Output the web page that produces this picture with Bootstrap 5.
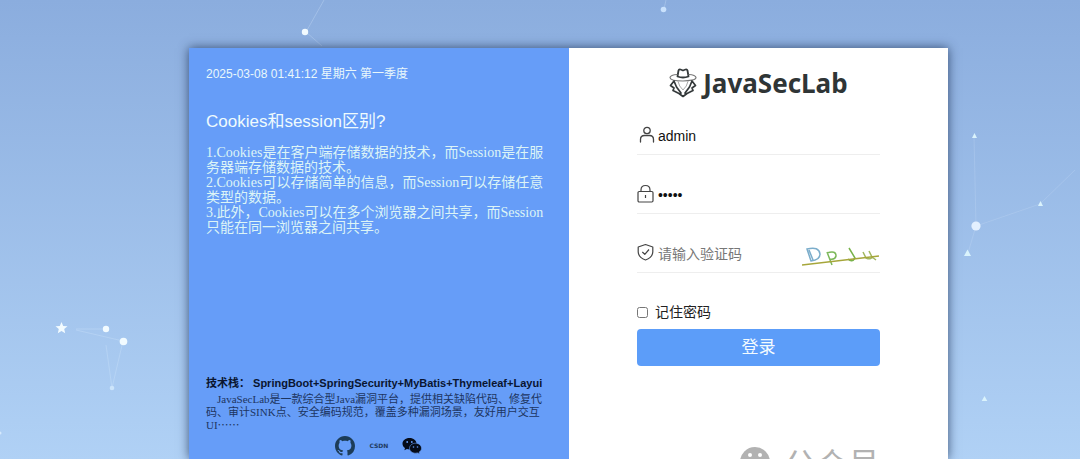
<!DOCTYPE html>
<html lang="zh-CN">
<head>
<meta charset="utf-8">
<meta name="viewport" content="width=device-width, initial-scale=1">
<title>JavaSecLab</title>
<link href="https://cdn.jsdelivr.net/npm/bootstrap@5.3.0/dist/css/bootstrap.min.css" rel="stylesheet">
<style>
  body { font-family: "Liberation Sans", "Noto Sans CJK SC", sans-serif; background: linear-gradient(#8badde, #b0d1f5) no-repeat; color: #222; }
  .stage { height: 100vh; padding-top: 48px; }
  .login-panel { width: 70.3%; margin-left: 17.5%; background: #fff; box-shadow: 0 0 10px rgba(30, 50, 85, .8); }
  .intro { background: #669df8; padding: 18px 17px 0; }
  .clock { font-size: 12px; line-height: 16px; color: #e9f8fb; }
  .topic { font-size: 17px; line-height: 24px; margin: 28px 0 11px; color: #effbfd; font-weight: 400; }
  .serif { font-family: "Liberation Serif", "Noto Sans CJK SC", serif; }
  .answer { font-size: 14px; line-height: 15px; color: #dcf4f6; }
  .stack { font-size: 11px; line-height: 16px; color: #0a1530; white-space: nowrap; }
  .about { font-size: 11px; line-height: 13px; text-indent: 11px; color: #1d3561; margin: 2px 0 0; }
  .social { height: 27px; gap: 14px; }
  .csdn { font: bold 6px "DejaVu Sans", sans-serif; color: #1e3a63; }
  .sign-in { padding: 18px 9% 0; }
  .brand { font: 700 26px/34px "Noto Sans", sans-serif; color: #2f3536; gap: 6px; }
  .field { border-bottom: 1px solid #eee; height: 59px; padding-top: 22px; gap: 3px; }
  .field.first { height: 55px; padding-top: 18px; }
  .field label { padding-bottom: 2px; }
  .field input { font-size: 14px; line-height: 20px; color: #111; background: none; min-width: 0; }
  .field input::placeholder { color: #777; opacity: 1; }
  .remember { font-size: 14px; line-height: 20px; margin-top: 29px; gap: 7px; }
  .remember input { width: 11px; height: 11px; margin: 0; }
  .btn-login { background: #5c9df9; color: #f3fbff; font-size: 17px; line-height: 25px; border: 0; border-radius: 4px; padding: 6px; margin-top: 7px; }
  .btn-login:hover { background: #4a8ef0; color: #fff; }
  .account { color: #b2b2b2; font-size: 32px; line-height: 36px; margin-top: 81px; gap: 6px; white-space: nowrap; }
</style>
</head>
<body class="overflow-hidden">
<svg class="position-absolute top-0 start-0 w-100 h-100" viewBox="0 0 1080 459" preserveAspectRatio="xMidYMid slice" aria-hidden="true">
  <g stroke="#d5e8fb" stroke-opacity=".3" fill="none">
    <path d="M76 329 105 329M76 330 123 341M106 345 112 388 123 341M306 32 324 0M306 32 322 46M664 9 666 0"/>
    <path d="M976 226 1040 204 1075 170M976 226 974 136M976 226 968 253" stroke-opacity=".2"/>
  </g>
  <g fill="#f2fbff">
    <path d="m61.500 322 1.700 4 4.300.3-3.300 2.800 1 4.200-3.700-2.300-3.700 2.300 1-4.200-3.300-2.800 4.300-.3z"/>
    <circle cx="106" cy="329" r="3.200"/><circle cx="123.500" cy="341.500" r="3.800"/>
    <circle cx="305" cy="32" r="3.200"/><circle cx="976" cy="226" r="4.600" fill="#e3f0ff"/>
    <path d="m967.500 249.500 3.500 6.500h-7zM974.500 133l2.500 5h-5zM984.500 396l2.800 5h-5.600zM1040.500 201l2.500 5h-5z" fill="#daf3fc"/>
    <circle cx="112" cy="388" r="2.300" fill="#cde5fb"/><circle cx="663.500" cy="9.500" r="2.800" fill="#c9e1fc"/><circle cx="0" cy="433" r="1.500" fill="#d5e9fc"/>
  </g>
</svg>
<main class="stage position-relative">
  <div class="login-panel row g-0 h-100">
    <section class="intro col-6 d-flex flex-column h-100">
      <div class="clock">2025-03-08 01:41:12 星期六 第一季度</div>
      <h1 class="topic">Cookies和session区别?</h1>
      <div class="answer serif">
        <div>1.Cookies是在客户端存储数据的技术，而Session是在服务器端存储数据的技术。</div>
        <div>2.Cookies可以存储简单的信息，而Session可以存储任意类型的数据。</div>
        <div>3.此外，Cookies可以在多个浏览器之间共享，而Session只能在同一浏览器之间共享。</div>
      </div>
      <div class="stack fw-bold mt-auto">技术栈： SpringBoot+SpringSecurity+MyBatis+Thymeleaf+Layui</div>
      <p class="about serif">JavaSecLab是一款综合型Java漏洞平台，提供相关缺陷代码、修复代码、审计SINK点、安全编码规范，覆盖多种漏洞场景，友好用户交互UI⋯⋯</p>
      <div class="social d-flex justify-content-center align-items-center flex-shrink-0">
        <a href="#" aria-label="GitHub" class="d-flex"><svg width="20" height="20" viewBox="0 0 16 16" fill="#1c3c58"><path d="M8 0C3.580 0 0 3.580 0 8c0 3.540 2.290 6.530 5.470 7.590.4.070.55-.17.55-.38 0-.19-.01-.82-.01-1.490-2.010.37-2.530-.49-2.690-.94-.09-.23-.48-.94-.82-1.130-.28-.15-.68-.52-.01-.53.63-.01 1.080.58 1.230.82.72 1.210 1.870.87 2.330.66.07-.52.28-.87.51-1.070-1.780-.2-3.640-.89-3.640-3.950 0-.87.31-1.590.82-2.150-.08-.2-.36-1.020.08-2.120 0 0 .67-.21 2.200.82.64-.18 1.320-.27 2-.27s1.360.09 2 .27c1.530-1.040 2.200-.82 2.200-.82.44 1.100.16 1.920.08 2.120.51.56.82 1.270.82 2.150 0 3.070-1.870 3.750-3.650 3.950.29.25.54.73.54 1.480 0 1.070-.01 1.930-.01 2.200 0 .21.15.46.55.38A8.010 8.010 0 0 0 16 8c0-4.420-3.580-8-8-8"/></svg></a>
        <a href="#" class="csdn text-decoration-none">CSDN</a>
        <a href="#" aria-label="微信" class="d-flex"><svg width="20" height="18" viewBox="0 0 20 18"><path d="M7.500 1C3.400 1 .5 3.500.5 6.700c0 1.800 1 3.300 2.500 4.300l-.6 2.200 2.500-1.200c.9.300 1.700.4 2.600.4 4.100 0 7-2.500 7-5.700S11.600 1 7.500 1" fill="#050b18"/><path d="M13.500 6.200c-3.300 0-6 2.200-6 5s2.700 5 6 5c.8 0 1.500-.1 2.200-.3l2 1.100-.5-1.900c1.400-1 2.300-2.300 2.300-3.900 0-2.800-2.700-5-6-5" fill="#050b18" stroke="#669df8" stroke-width=".6"/><g fill="#669df8"><circle cx="5.200" cy="5" r=".9"/><circle cx="9.800" cy="5" r=".9"/><circle cx="11.500" cy="10" r=".8"/><circle cx="15.500" cy="10" r=".8"/></g></svg></a>
      </div>
    </section>
    <section class="sign-in col-6 h-100 overflow-hidden">
      <div class="brand d-flex justify-content-center align-items-center">
        <svg class="flex-shrink-0" width="28" height="30" viewBox="0 0 28 30" fill="none" stroke="#34393a" stroke-linejoin="round" stroke-linecap="round"><path d="M8.500 8.500 9.500 2.500Q10 1 11.500 1.500L14 2.500 16.500 1.500Q18 1 18.500 2.500L19.500 8.500Q14 10.500 8.500 8.500Z" stroke-width="1.800"/><path d="M8 6.500C4 6.500 1 8 1 9.500 1 12 8 13 14 13s13-1 13-3.500c0-1.500-3-3-7-3" stroke="#777" stroke-width="1.200"/><path d="M9 13.500q1 5 5 8.500Q18 18.500 19 13.500" stroke="#aaa"/><path d="M5 13 1.500 17.500 5 20 4 22.500 10 25.500 14 28.500 18 25.500 24 22.500 23 20 26.500 17.500 23 13M5 13 7.500 19 12 25M23 13 20.500 19 16 25" stroke-width="1.700"/></svg>
        <span>JavaSecLab</span>
      </div>
      <form onsubmit="return false">
        <div class="field first d-flex align-items-center">
          <label for="user" class="d-flex"><svg width="18" height="18" viewBox="0 0 18 18" fill="none" stroke="#444" stroke-width="1.300" stroke-linecap="round"><circle cx="10" cy="4.500" r="3.200"/><path d="M3.500 16v-2.500q0-4 4-4h5q4 0 4 4V16"/></svg></label>
          <input id="user" class="border-0 p-0 flex-fill" type="text" value="admin" aria-label="用户名">
        </div>
        <div class="field d-flex align-items-center">
          <label for="pass" class="d-flex"><svg width="18" height="20" viewBox="0 0 18 20" fill="none" stroke="#444" stroke-width="1.200"><rect x="1" y="7.500" width="15" height="10.500" rx="1.200"/><path d="M4 7.500V6q0-4.500 4.500-4.500T13 6v1.500M8.500 11v3"/></svg></label>
          <input id="pass" class="border-0 p-0 flex-fill" type="password" value="admin" aria-label="密码">
        </div>
        <div class="field d-flex align-items-center">
          <label for="code" class="d-flex"><svg width="18" height="20" viewBox="0 0 18 20" fill="none" stroke="#444" stroke-width="1.200" stroke-linejoin="round"><path d="M8.500 1.500 15.800 4V9Q15.500 14.500 8.500 17 1.500 14.500 1.200 9V4ZM5.300 9 7.800 11.300 12 6.500"/></svg></label>
          <input id="code" class="border-0 p-0 flex-fill" type="text" placeholder="请输入验证码" aria-label="验证码">
          <svg class="flex-shrink-0" width="78" height="28" viewBox="0 -6 78 28" fill="none" stroke-width="1.500" role="img" aria-label="验证码图片"><path d="M5 3Q17 0 18 8 18 14 9 15ZM7 4 11 14" stroke="#7badcb"/><path d="M25 6 30 19M25 7Q34 4 34 10 33 14 28 13" stroke="#7cb85a"/><path d="M47 2 53 12Q50 17 46 13" stroke="#78b24a"/><path d="M61 6 64 12Q69 14 70 11L67 5M70 11 74 14" stroke="#a1b860"/><path d="M0 19 77 10" stroke="#a6a63a" stroke-width="1.700"/></svg>
        </div>
        <div class="remember d-flex align-items-center">
          <input type="checkbox" id="remember"><label for="remember">记住密码</label>
        </div>
        <button type="submit" class="btn btn-login w-100">登录</button>
      </form>
      <div class="account d-flex justify-content-end">
        <svg width="38" height="32" viewBox="0 0 38 32" fill="#b2b2b2"><circle cx="15" cy="15" r="15"/><g fill="#fff"><circle cx="10" cy="8" r="2"/><circle cx="20" cy="8" r="2"/></g></svg>
        <span>公众号</span>
      </div>
    </section>
  </div>
</main>
<script src="https://cdn.jsdelivr.net/npm/bootstrap@5.3.0/dist/js/bootstrap.bundle.min.js"></script>
</body>
</html>
